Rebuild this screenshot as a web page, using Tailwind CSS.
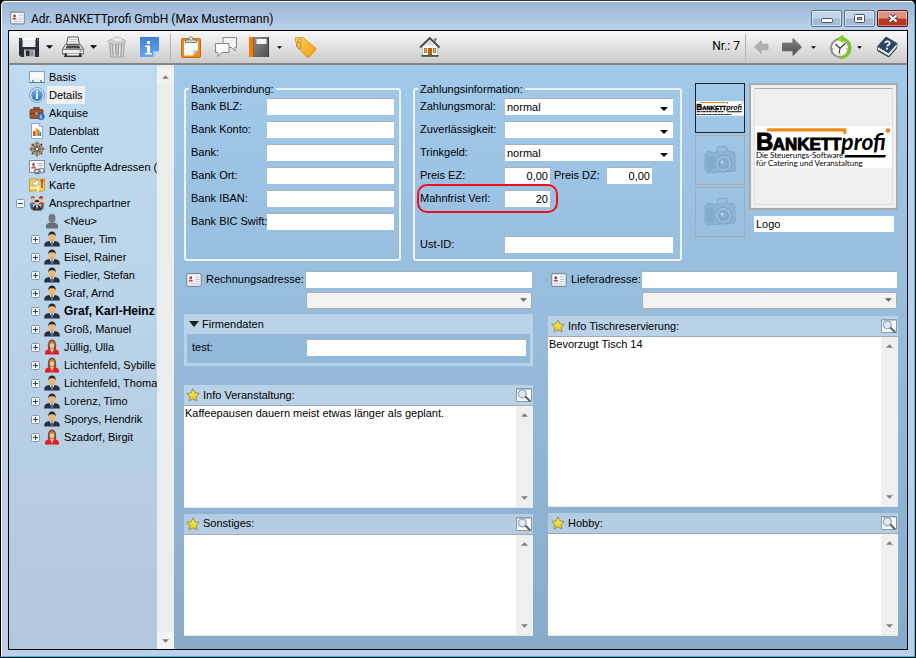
<!DOCTYPE html>
<html lang="de">
<head>
<meta charset="utf-8">
<meta name="viewport" content="width=device-width, initial-scale=1">
<title>Adr. BANKETTprofi GmbH (Max Mustermann)</title>
<script src="https://cdn.jsdelivr.net/npm/@tailwindcss/browser@4"></script>
</head>
<body class="bg-black font-['Liberation_Sans',Arial,sans-serif] text-[11px] leading-4 text-black">

<!-- Icon sprite -->
<svg class="absolute size-0" aria-hidden="true">
  <defs>
    <linearGradient id="gGold" x1="0" y1="0" x2="0" y2="1"><stop offset="0" stop-color="#fdf56a"/><stop offset="1" stop-color="#e3c713"/></linearGradient>
    <linearGradient id="gTag" x1="0" y1="0" x2="1" y2="1"><stop offset="0" stop-color="#ffd45c"/><stop offset="1" stop-color="#ee9b0c"/></linearGradient>
    <linearGradient id="gBlue" x1="0" y1="0" x2="0" y2="1"><stop offset="0" stop-color="#7fb4e6"/><stop offset="1" stop-color="#2a71c2"/></linearGradient>
    <linearGradient id="gNote" x1="0" y1="0" x2="0" y2="1"><stop offset="0" stop-color="#3f7fd8"/><stop offset="1" stop-color="#6aa6ee"/></linearGradient>
    <linearGradient id="gArrow" x1="0" y1="0" x2="0" y2="1"><stop offset="0" stop-color="#8a8a8a"/><stop offset="1" stop-color="#4c4c4c"/></linearGradient>
    <linearGradient id="gBook" x1="0" y1="0" x2="1" y2="1"><stop offset="0" stop-color="#8b8b8b"/><stop offset="1" stop-color="#4f4f4f"/></linearGradient>
  </defs>
  <symbol id="card" viewBox="0 0 16 14">
    <rect x=".7" y=".7" width="14.6" height="12.6" rx="1.5" fill="#fbfcfd" stroke="#7f8c9c" stroke-width="1.2"/>
    <circle cx="4.8" cy="4.8" r="1.5" fill="#8f4a48"/><path d="M2.4 8.6c0-2.6 4.8-2.6 4.8 0z" fill="#c4383a"/>
    <path d="M9 4h4.5M9 6.5h4.5M9 8.5h4.5M2.5 10.8h11" stroke="#b3bcc8" stroke-width=".9"/>
  </symbol>
  <symbol id="down" viewBox="0 0 8 4"><path d="M0 0h8L4 4z" fill="currentColor"/></symbol>
  <symbol id="up" viewBox="0 0 8 4"><path d="M0 4h8L4 0z" fill="currentColor"/></symbol>
  <symbol id="save" viewBox="0 0 22 22">
    <path d="M1 2h20v19H3l-2-2z" fill="#2b2e33"/><path d="M4.5 2h13v9h-13z" fill="#e9edf1"/><path d="M4.5 2h13v2h-13z" fill="#fff"/>
    <path d="M6 13.500h11V21H6z" fill="#b9bdc2"/><path d="M8 14.500h3.500v5.500H8z" fill="#26292d"/><path d="M12.500 14.500h3v5.500h-3z" fill="#8d9196"/><path d="M2 3h1v2H2zM19 3h1v2h-1z" fill="#777"/>
  </symbol>
  <symbol id="print" viewBox="0 0 24 22">
    <path d="M5.500 9L7 1h10l1.500 8z" fill="#fbfbfb" stroke="#55585b"/><path d="M8 3.500h8M7.600 5.500h8.800M7.300 7.500h9.500" stroke="#b4b8ba" stroke-width=".8"/>
    <path d="M4.500 8.500h15l3 4.500v5h-21v-5z" fill="#d3d5d6" stroke="#606366"/><path d="M6 9.500h12l1.500 3h-15z" fill="#444749"/>
    <path d="M1.500 13.500h21v4h-21z" fill="#eceded" stroke="#6c6f71" stroke-width=".8"/><path d="M4 17.500h16l1 3.500H3z" fill="#303235"/><path d="M6 17.500h12v2H6z" fill="#f6f6f6"/><circle cx="19.500" cy="15.300" r="1" fill="#62b53c"/>
  </symbol>
  <symbol id="trash" viewBox="0 0 22 22">
    <path d="M3.500 6.500h15l-1.300 14.500H4.800z" fill="#cfcfcf" stroke="#a4a4a4"/><path d="M6.500 8.500l.7 11M9.700 8.500l.3 11M12.500 8.500l-.3 11M15.600 8.500l-.7 11" stroke="#9c9c9c" stroke-width="1.200"/><path d="M8 8.500l.5 11M14 8.500l-.5 11" stroke="#f0f0f0"/>
    <ellipse cx="11" cy="5.500" rx="9" ry="2.600" fill="#dcdcdc" stroke="#a9a9a9"/><path d="M5 4.500l3-3 4-.5 4 1.500 1.500 2.500-6 1.500z" fill="#e8e8e8" stroke="#b5b5b5" stroke-width=".8"/>
  </symbol>
  <symbol id="note" viewBox="0 0 22 22">
    <path d="M2 1h19v14l-6 6H2z" fill="url(#gNote)"/><path d="M15 21c1-2 .8-4 .3-6 2 .6 4 .6 5.700 0z" fill="#b8d6fa"/>
    <path d="M9 5h3v3H9zM7 9.500h5V17h2v1.500H7V17h2v-6H7z" fill="#fff"/>
  </symbol>
  <symbol id="clip" viewBox="0 0 22 22">
    <rect x="1.500" y="2.500" width="19" height="19" rx="1" fill="#f08a1d" stroke="#c96a0a"/><path d="M4 5h14v9l-5 5.500H4z" fill="#fbfbfb"/><path d="M12.500 19.500l1-5.500H18z" fill="#c3c8cc"/>
    <path d="M5.500 6.500V4H9a2 2 0 0 1 4 0h3.500v2.500z" fill="#d8dadc" stroke="#707477" stroke-width=".9"/><circle cx="11" cy="2.500" r="1.800" fill="#eee" stroke="#777" stroke-width=".8"/>
  </symbol>
  <symbol id="chat" viewBox="0 0 24 22">
    <path d="M9 1.500h13.500v10H21v3.500l-3.500-3.500H9z" fill="#f3f3f3" stroke="#85888a"/><path d="M1.500 7.500H15v9H7.500L4 20.500v-4H1.500z" fill="#fafafa" stroke="#85888a"/>
  </symbol>
  <symbol id="folder" viewBox="0 0 22 22">
    <path d="M1 1h5v20H1z" fill="#ee7d12"/><path d="M5 1h1v20H5z" fill="#b85505"/><path d="M6 1h15v20H6z" fill="url(#gBook)"/><path d="M8.500 3h10v5h-10z" fill="#f4f4f4"/><path d="M20 1h1v20h-1z" fill="#3e3e3e"/>
  </symbol>
  <symbol id="tag" viewBox="0 0 24 22">
    <path d="M2 2l8-.5L22.500 12c.7.600.7 1.300 0 2L16 21c-.7.600-1.500.6-2.100 0L4 11z" fill="url(#gTag)" stroke="#d18a10" stroke-width=".8"/><circle cx="6.500" cy="5" r="1.600" fill="#fff6dc" stroke="#9c7a33" stroke-width=".8"/><path d="M6.500 5c-3.500 1.500-3.500 5.500-1 7.500s3-2 1.500-6" fill="none" stroke="#a68648" stroke-width="1"/>
  </symbol>
  <symbol id="home" viewBox="0 0 22 22">
    <path d="M3.500 10.500L11 3.500l7.500 7V20h-15z" fill="#fafafa" stroke="#aaa" stroke-width=".6"/><path d="M1 11.500L10.800 2 20.500 11.500" fill="none" stroke="#444b4e" stroke-width="1.900"/><path d="M6 9.500l5-4.800 5 4.800z" fill="#d9dcdd"/>
    <path d="M15 3h3M16 3v3" stroke="#555" stroke-width="1.200"/><path d="M5 12h3v5H5zM14 12h3v5h-3z" fill="#a8793a"/><path d="M6 13h1v1H6zM6 15h1v1H6zM15 13h1v1h-1zM15 15h1v1h-1z" fill="#fff"/><path d="M9 12h4v7H9z" fill="#c25d0c"/><path d="M2.500 19h17v1.800h-17z" fill="#4b4d4d"/><path d="M9 18.500h4v1.500H9z" fill="#3c7a1e"/>
  </symbol>
  <symbol id="prev" viewBox="0 0 16 16"><path d="M8.500 1.500v3.800h6.500v5.400H8.500v3.800L1.500 8z" fill="#b1b1b1" stroke="#a2a2a2" stroke-width=".7"/></symbol>
  <symbol id="next" viewBox="0 0 22 22"><path d="M12 2.500v4.700H1.500v7.600H12v4.700l8.500-8.500z" fill="url(#gArrow)" stroke="#555" stroke-width=".8"/></symbol>
  <symbol id="clock" viewBox="0 0 24 24">
    <circle cx="12" cy="13" r="9" fill="#f6f6f4" stroke="#8c8f8b" stroke-width="2"/><path d="M12 3.500c6-.5 10 4 10 9.500s-4.500 10-10 9.800" fill="none" stroke="#7cc81e" stroke-width="3"/><path d="M15 0v7.500L9 4z" fill="#8fda24" stroke="#5ea40e" stroke-width=".5"/>
    <path d="M7.500 9l4.500 4.500L17.500 8M12 13.500l-1 5" fill="none" stroke="#3c3f3c" stroke-width="1.200"/><path d="M4 14l1.500 0M12 20v-1M18 14h1.500" stroke="#777"/>
  </symbol>
  <symbol id="help" viewBox="0 0 22 22">
    <path d="M10 1L21 7.500 12.500 17 1.500 10.500z" fill="#2c4763" stroke="#1c3048" stroke-width=".8"/><path d="M1.500 10.500L12.500 17 21 7.500v3.500L12.800 20.500 1.500 14z" fill="#e6eaed" stroke="#2c4763" stroke-width=".7"/><path d="M1.500 13.500l11.200 6.800L21 11v1.300l-8.200 9.200L1.500 15z" fill="#233a54"/>
    <path d="M9 6.800c1.200-2.600 5.300-1.400 4.700.8-.4 1.400-2.200 1-2.500 2.800" fill="none" stroke="#fff" stroke-width="1.700"/><path d="M10 11.700h2v1.800h-2z" fill="#fff"/>
  </symbol>
  <symbol id="basis" viewBox="0 0 16 16"><path d="M.5 2.500h15v11H.5z" fill="#eaf4f4" stroke="#8f9fac"/><path d="M.5 13.500h15" stroke="#5f7c8e"/><path d="M3 11h2v2H3zM11 11h2v2h-2z" fill="#7ca4a9"/><path d="M2 4h12v5H2z" fill="#f7fcfb"/></symbol>
  <symbol id="info" viewBox="0 0 16 16"><circle cx="8" cy="8" r="7.400" fill="#eef4fa" stroke="#5f8fc4" stroke-width=".9"/><circle cx="8" cy="8" r="5.900" fill="url(#gBlue)"/><path d="M7 3.700h2v1.800H7zM7 6.500h2v5.500H7z" fill="#fff"/></symbol>
  <symbol id="case" viewBox="0 0 16 16"><path d="M5 5V3h5v2" fill="none" stroke="#5d3216" stroke-width="1.300"/><rect x="1" y="4.500" width="13" height="9" rx="1" fill="#a3562a" stroke="#71371a" stroke-width=".8"/><path d="M1 8.500h13" stroke="#6a3216"/><path d="M6.500 7.500h2v2h-2z" fill="#e5c38b"/><circle cx="12" cy="11.500" r="3.300" fill="#2e7ac8" stroke="#1d5799" stroke-width=".5"/><path d="M11.500 9.500h1v1h-1zM11.500 11h1v2.500h-1z" fill="#fff"/></symbol>
  <symbol id="chart" viewBox="0 0 16 16"><path d="M2.500.5h8l3 3v12h-11z" fill="#fff" stroke="#8b9cb0" stroke-width=".9"/><path d="M10.500.5v3h3" fill="#dce5ee" stroke="#8b9cb0" stroke-width=".8"/><path d="M4 8h2.500v5H4z" fill="#e8433a"/><path d="M6.500 5.500H9V13H6.500z" fill="#f4a02a"/><path d="M9 7h1.500v6H9z" fill="#50b848"/><path d="M10.500 9H12v4h-1.500z" fill="#3f70d0"/></symbol>
  <symbol id="wheel" viewBox="0 0 16 16"><path d="M8 .5v15M.5 8h15M2.700 2.700l10.600 10.600M13.300 2.700L2.700 13.300" stroke="#6f5238" stroke-width="1.500"/><circle cx="8" cy="8" r="5" fill="none" stroke="#5d452f" stroke-width="2.200"/><circle cx="8" cy="8" r="5" fill="none" stroke="#d8c3a5" stroke-width="1"/><circle cx="8" cy="8" r="1.900" fill="#e8d6bb" stroke="#5d452f" stroke-width=".8"/></symbol>
  <symbol id="link" viewBox="0 0 16 16"><path d="M.5 1.500h15v12H.5z" fill="#f7f9fa" stroke="#7f8c9c"/><circle cx="4.500" cy="5.500" r="1.400" fill="#95504a"/><path d="M2 9.500c0-3 5-3 5 0z" fill="#cf5050"/><path d="M8.500 4.500h5M8.500 6.500h5" stroke="#a9b5c2"/><rect x="5.500" y="10.500" width="5.500" height="4" rx="2" fill="none" stroke="#70777e" stroke-width="1.400"/><rect x="9.500" y="9.500" width="5.500" height="4" rx="2" fill="none" stroke="#8c939a" stroke-width="1.400"/></symbol>
  <symbol id="map" viewBox="0 0 16 16"><path d="M.5 2.500l5-1 5 1 5-1v12l-5 1-5-1-5 1z" fill="#f0cf55" stroke="#bd9425" stroke-width=".8"/><path d="M1 11h10M9 8v7" stroke="#fff6c8" stroke-width="1.500"/><path d="M3.500 5h3V3.500h3V8h-6z" fill="#fff" stroke="#999" stroke-width=".7"/><circle cx="13" cy="4" r="1.700" fill="#e23c26"/><path d="M13 5.500V11" stroke="#8d2b1e" stroke-width="1.200"/></symbol>
  <symbol id="man" viewBox="0 0 16 16"><path d="M.3 15.500v-1.800c0-2.400 2.200-3 4.700-3.700h6c2.500.7 4.700 1.300 4.700 3.700v1.800z" fill="#2d3035"/><path d="M5.500 10h5L8 14.800z" fill="#f4f6f8"/><path d="M7.300 11h1.400l.6 4.500H6.700z" fill="#3b6fb8"/><ellipse cx="8" cy="6" rx="3.300" ry="4" fill="#edb878"/><path d="M4.200 5.500C3.700-1.200 12.300-1.200 11.800 5.500 11 3.500 9.500 3.300 8 3.300s-3 .2-3.800 2.200z" fill="#292421"/><path d="M6.500 8.500h3v2l-1.500 1-1.500-1z" fill="#dca05f"/></symbol>
  <symbol id="woman" viewBox="0 0 16 16"><path d="M4.300 11C3 5 4.500.5 8 .5S13 5 11.700 11z" fill="#8a4b2a"/><path d="M1 15.500v-1.800c0-2.400 2-3.200 4.500-3.700h5c2.500.5 4.500 1.300 4.500 3.700v1.800z" fill="#e3222a"/><path d="M6 9.800h4L8 14z" fill="#f6d9bb"/><ellipse cx="8" cy="6" rx="2.400" ry="3.500" fill="#f2c596"/><path d="M5.400 5.500C5.500 2.500 10.500 2.500 10.600 5.500 9.500 3.700 7.500 4 5.400 5.500z" fill="#9b5a35"/><path d="M4 13v2.500M12 13v2.500" stroke="#a8131a" stroke-width=".7"/></symbol>
  <symbol id="shade" viewBox="0 0 16 16"><path d="M2 15.500v-2.700c0-2 2-2.600 4-3.300h4c2 .7 4 1.300 4 3.300v2.700z" fill="#6a6e72"/><ellipse cx="8" cy="5.200" rx="3.500" ry="4.500" fill="#777b7f"/></symbol>
  <symbol id="team" viewBox="0 0 16 16"><circle cx="3.800" cy="3.500" r="2.200" fill="#edb56f"/><path d="M1.500 3C2 .5 5.500.5 6 3z" fill="#a06024"/><path d="M.5 9.500C.5 6 7 6 7 9.500z" fill="#4c83c0"/><circle cx="12" cy="3.500" r="2.200" fill="#edb880"/><path d="M9.800 3.500C10 0 14.200 0 14.200 3.500z" fill="#b92b25"/><path d="M9 9.500C9 6 15.500 6 15.500 9.500z" fill="#d83b34"/><path d="M1 9.500h3v5H2zM12 9.500h3l-1 5h-2z" fill="#53585e"/><circle cx="8" cy="7.500" r="2.400" fill="#edb880"/><path d="M5.600 7C6 4 10 4 10.400 7z" fill="#2b2420"/><path d="M3.500 15.500C3.500 8 12.500 8 12.500 15.500z" fill="#2e3136"/><path d="M7 10.500h2l-1 4z" fill="#fff"/></symbol>
  <symbol id="plus" viewBox="0 0 9 9"><rect x=".5" y=".5" width="8" height="8" rx="1" fill="#f6f8fa" stroke="#8b98a8"/><path d="M2 4.500h5M4.500 2v5" stroke="#2a4280"/></symbol>
  <symbol id="minus" viewBox="0 0 9 9"><rect x=".5" y=".5" width="8" height="8" rx="1" fill="#f6f8fa" stroke="#8b98a8"/><path d="M2 4.500h5" stroke="#2a4280"/></symbol>
  <symbol id="star" viewBox="0 0 14 14"><path d="M7 .8l1.900 4.100 4.500.5-3.300 3.100.9 4.500-4-2.200-4 2.200.9-4.500L.6 5.400l4.500-.5z" fill="url(#gGold)" stroke="#8f8a4c" stroke-width=".9" stroke-linejoin="round"/></symbol>
  <symbol id="find" viewBox="0 0 16 14"><path d="M.5.5h15v13H.5z" fill="#f8fafb" stroke="#8f9aa5"/><path d="M.5 1.500h15" stroke="#8a97a4" stroke-dasharray="1 1"/><circle cx="6.300" cy="5.800" r="4" fill="#dcebf8" stroke="#92a4b5" stroke-width="1.200"/><path d="M9.300 8.500l5 5" stroke="#5d6164" stroke-width="2"/></symbol>
  <symbol id="camera" viewBox="0 0 34 30">
    <path d="M2 9l2-1V6.500h4V8l6-1 1-5 8-1 2 5 6 1 1 2v17L4 28l-2-3z" fill="#8db3d3" stroke="#7ba3c6" stroke-width=".8"/><path d="M15.500 2.500L22 2l1 3.500-8 .8z" fill="#9bbfdc"/><path d="M3 11l8-.8v15L4 26z" fill="#82aacc"/>
    <circle cx="20.500" cy="18.500" r="8.300" fill="#97bbd9" stroke="#7ba2c4"/><circle cx="20.500" cy="18.500" r="5.600" fill="#7fa7ca"/><circle cx="20.500" cy="18.500" r="3.300" fill="#8bb2d5"/><circle cx="19" cy="17" r="1.400" fill="#b9d6ec"/>
  </symbol>
</svg>

<div class="flex min-h-screen flex-col rounded-t-md border border-t-[#33343c] border-r-black border-b-black border-l-black bg-[#b9d0ea]">
 <div class="flex flex-1 flex-col rounded-t-[5px] border border-t-white border-r-[#2cc4e4] border-b-[#2cc4e4] border-l-white bg-linear-to-b from-[#9bb5d4] to-[#b9d1eb] to-[28px] px-[6px] pb-[6px]">

  <header class="flex h-7 items-center gap-[6px] pl-[2px]">
    <svg class="mt-[3px] h-[14px] w-[15px]"><use href="#card"/></svg>
    <h1 class="mt-[5px] font-[Roboto,sans-serif] text-[12px] leading-5">Adr. BANKETTprofi GmbH (Max Mustermann)</h1>
    <div class="ml-auto flex gap-[2px] pt-[5px]">
      <button aria-label="Minimieren" class="flex h-[17px] w-[31px] items-center justify-center rounded-[2px] border border-[#5b7591] bg-linear-to-b from-[#c3d5ea] from-45% to-[#a2bbd7] to-55% pt-1 ring-1 ring-white/50 ring-inset"><svg class="h-[5px] w-[12px]"><rect x=".5" y=".5" width="11" height="4" rx="1" fill="#fff" stroke="#4a5563"/></svg></button>
      <button aria-label="Maximieren" class="flex h-[17px] w-[31px] items-center justify-center rounded-[2px] border border-[#5b7591] bg-linear-to-b from-[#c3d5ea] from-45% to-[#a2bbd7] to-55% ring-1 ring-white/50 ring-inset"><svg class="h-[9px] w-[11px]"><rect x=".5" y=".5" width="10" height="8" rx="1" fill="#fff" stroke="#4a5563"/><rect x="3.500" y="3.500" width="4" height="2" fill="#a7bfda" stroke="#4a5563"/></svg></button>
      <button aria-label="Schließen" class="flex h-[17px] w-[31px] items-center justify-center rounded-[2px] border border-[#4d1822] bg-linear-to-b from-[#dc9384] from-45% to-[#b9361f] to-55% ring-1 ring-white/40 ring-inset"><svg class="h-[9px] w-[12px]"><path d="M2.500 1.500l7 6M9.500 1.500l-7 6" stroke="#4c3a44" stroke-width="4"/><path d="M2.500 1.500l7 6M9.500 1.500l-7 6" stroke="#fff" stroke-width="2.200"/></svg></button>
    </div>
  </header>

  <div class="flex flex-1 flex-col border border-black">
   <nav aria-label="Werkzeuge" class="flex h-[34px] shrink-0 items-center border-b-2 border-[#858585] bg-linear-to-b from-[#f8f8f8] to-[#cbcbcb] pr-[9px] pl-[9px]">
     <button aria-label="Speichern"><svg class="size-[22px]"><use href="#save"/></svg></button>
     <button aria-label="Speichern-Menü" class="ml-[3px] flex w-3 justify-center"><svg class="h-1 w-[7px]"><use href="#down"/></svg></button>
     <button aria-label="Drucken" class="ml-[6px]"><svg class="h-[22px] w-6"><use href="#print"/></svg></button>
     <button aria-label="Druck-Menü" class="ml-[2px] flex w-3 justify-center"><svg class="h-1 w-[7px]"><use href="#down"/></svg></button>
     <button aria-label="Löschen" class="ml-[7px]"><svg class="size-[22px]"><use href="#trash"/></svg></button>
     <button aria-label="Info" class="ml-[10px]"><svg class="size-[22px]"><use href="#note"/></svg></button>
     <span class="ml-[10px] h-[26px] w-px bg-[#b4b4b4]"></span>
     <button aria-label="Aufgaben" class="ml-[9px]"><svg class="size-[22px]"><use href="#clip"/></svg></button>
     <button aria-label="Nachrichten" class="ml-3"><svg class="h-[22px] w-6"><use href="#chat"/></svg></button>
     <button aria-label="Ordner" class="ml-[10px]"><svg class="size-[22px]"><use href="#folder"/></svg></button>
     <button aria-label="Ordner-Menü" class="ml-[3px] flex w-3 justify-center"><svg class="h-[3px] w-[5px]"><use href="#down"/></svg></button>
     <button aria-label="Etikett" class="ml-2"><svg class="h-[22px] w-6"><use href="#tag"/></svg></button>
     <button aria-label="Start" class="ml-[102px]"><svg class="size-[22px]"><use href="#home"/></svg></button>
     <span class="ml-auto pb-[2px] font-[Roboto,sans-serif] text-[12px]">Nr.: 7</span>
     <span class="ml-[5px] h-[26px] w-px bg-[#b4b4b4]"></span>
     <button aria-label="Zurück" class="ml-[7px]"><svg class="size-4"><use href="#prev"/></svg></button>
     <button aria-label="Weiter" class="ml-3"><svg class="size-[22px]"><use href="#next"/></svg></button>
     <button aria-label="Weiter-Menü" class="ml-1 flex w-3 justify-center"><svg class="h-[3px] w-[5px]"><use href="#down"/></svg></button>
     <button aria-label="Verlauf" class="ml-[9px]"><svg class="size-6"><use href="#clock"/></svg></button>
     <button aria-label="Verlauf-Menü" class="ml-px flex w-3 justify-center"><svg class="h-[3px] w-[5px]"><use href="#down"/></svg></button>
     <button aria-label="Hilfe" class="ml-[11px]"><svg class="size-[22px]"><use href="#help"/></svg></button>
   </nav>

   <div class="flex flex-1 bg-linear-to-b from-[#a1c9ea] to-[#89abca]">
    <aside class="flex w-[165px] shrink-0 bg-linear-to-b from-[#bfdbf1] to-[#b2c8dc]">
      <ul class="w-[148px] overflow-hidden pt-[3px] leading-[18px] whitespace-nowrap">
        <li class="flex items-center pl-5"><svg class="mr-1 size-4 shrink-0"><use href="#basis"/></svg><a href="#">Basis</a></li>
        <li class="flex items-center pl-5"><svg class="mr-[2px] size-4 shrink-0"><use href="#info"/></svg><a href="#" class="bg-[#f0f0f0] px-[2px]">Details</a></li>
        <li class="flex items-center pl-5"><svg class="mr-1 size-4 shrink-0"><use href="#case"/></svg><a href="#">Akquise</a></li>
        <li class="flex items-center pl-5"><svg class="mr-1 size-4 shrink-0"><use href="#chart"/></svg><a href="#">Datenblatt</a></li>
        <li class="flex items-center pl-5"><svg class="mr-1 size-4 shrink-0"><use href="#wheel"/></svg><a href="#">Info Center</a></li>
        <li class="flex items-center pl-5"><svg class="mr-1 size-4 shrink-0"><use href="#link"/></svg><a href="#">Verknüpfte Adressen (2)</a></li>
        <li class="flex items-center pl-5"><svg class="mr-1 size-4 shrink-0"><use href="#map"/></svg><a href="#">Karte</a></li>
        <li>
          <div class="flex items-center pl-[7px]"><svg class="mr-1 size-[9px] shrink-0"><use href="#minus"/></svg><svg class="mr-1 size-4 shrink-0"><use href="#team"/></svg><a href="#">Ansprechpartner</a></div>
          <ul>
            <li class="flex items-center pl-[35px]"><svg class="mr-1 size-4 shrink-0"><use href="#shade"/></svg><a href="#">&lt;Neu&gt;</a></li>
            <li class="flex items-center pl-[22px]"><svg class="mr-1 size-[9px] shrink-0"><use href="#plus"/></svg><svg class="mr-1 size-4 shrink-0"><use href="#man"/></svg><a href="#">Bauer, Tim</a></li>
            <li class="flex items-center pl-[22px]"><svg class="mr-1 size-[9px] shrink-0"><use href="#plus"/></svg><svg class="mr-1 size-4 shrink-0"><use href="#man"/></svg><a href="#">Eisel, Rainer</a></li>
            <li class="flex items-center pl-[22px]"><svg class="mr-1 size-[9px] shrink-0"><use href="#plus"/></svg><svg class="mr-1 size-4 shrink-0"><use href="#man"/></svg><a href="#">Fiedler, Stefan</a></li>
            <li class="flex items-center pl-[22px]"><svg class="mr-1 size-[9px] shrink-0"><use href="#plus"/></svg><svg class="mr-1 size-4 shrink-0"><use href="#man"/></svg><a href="#">Graf, Arnd</a></li>
            <li class="flex items-center pl-[22px]"><svg class="mr-1 size-[9px] shrink-0"><use href="#plus"/></svg><svg class="mr-1 size-4 shrink-0"><use href="#man"/></svg><a href="#" class="text-[12px] leading-[18px] font-bold">Graf, Karl-Heinz</a></li>
            <li class="flex items-center pl-[22px]"><svg class="mr-1 size-[9px] shrink-0"><use href="#plus"/></svg><svg class="mr-1 size-4 shrink-0"><use href="#man"/></svg><a href="#">Groß, Manuel</a></li>
            <li class="flex items-center pl-[22px]"><svg class="mr-1 size-[9px] shrink-0"><use href="#plus"/></svg><svg class="mr-1 size-4 shrink-0"><use href="#woman"/></svg><a href="#">Jüllig, Ulla</a></li>
            <li class="flex items-center pl-[22px]"><svg class="mr-1 size-[9px] shrink-0"><use href="#plus"/></svg><svg class="mr-1 size-4 shrink-0"><use href="#woman"/></svg><a href="#">Lichtenfeld, Sybille</a></li>
            <li class="flex items-center pl-[22px]"><svg class="mr-1 size-[9px] shrink-0"><use href="#plus"/></svg><svg class="mr-1 size-4 shrink-0"><use href="#man"/></svg><a href="#">Lichtenfeld, Thomas</a></li>
            <li class="flex items-center pl-[22px]"><svg class="mr-1 size-[9px] shrink-0"><use href="#plus"/></svg><svg class="mr-1 size-4 shrink-0"><use href="#man"/></svg><a href="#">Lorenz, Timo</a></li>
            <li class="flex items-center pl-[22px]"><svg class="mr-1 size-[9px] shrink-0"><use href="#plus"/></svg><svg class="mr-1 size-4 shrink-0"><use href="#man"/></svg><a href="#">Sporys, Hendrik</a></li>
            <li class="flex items-center pl-[22px]"><svg class="mr-1 size-[9px] shrink-0"><use href="#plus"/></svg><svg class="mr-1 size-4 shrink-0"><use href="#woman"/></svg><a href="#">Szadorf, Birgit</a></li>
          </ul>
        </li>
      </ul>
      <div class="flex w-[17px] flex-col justify-between bg-[#ececec] pt-[3px] text-[#808080]">
        <button aria-label="Nach oben" class="flex h-[17px] items-center justify-center bg-[#f2f2f2]"><svg class="h-1 w-[7px]"><use href="#up"/></svg></button>
        <button aria-label="Nach unten" class="flex h-[17px] items-center justify-center bg-[#f2f2f2]"><svg class="h-1 w-[7px]"><use href="#down"/></svg></button>
      </div>
    </aside>

    <main class="flex min-w-0 flex-1 flex-col gap-[10px] pt-4 pr-[9px] pb-[13px] pl-[10px] leading-[17px]">
      <div class="flex h-[180px]">
        <fieldset class="mr-3 min-w-0 flex-[205] rounded-[3px] border-2 border-[#edf3f8] pr-[5px] pl-[3px]">
          <legend class="px-[2px] leading-4">Bankverbindung:</legend>
          <div class="grid grid-cols-[76px_minmax(0,1fr)] gap-y-[6px] pt-px pl-[2px] whitespace-nowrap">
            <label for="blz">Bank BLZ:</label><input id="blz" class="h-[17px] w-full border-t border-[#a9b0b8] bg-white px-[2px]">
            <label for="konto">Bank Konto:</label><input id="konto" class="h-[17px] w-full border-t border-[#a9b0b8] bg-white px-[2px]">
            <label for="bank">Bank:</label><input id="bank" class="h-[17px] w-full border-t border-[#a9b0b8] bg-white px-[2px]">
            <label for="ort">Bank Ort:</label><input id="ort" class="h-[17px] w-full border-t border-[#a9b0b8] bg-white px-[2px]">
            <label for="iban">Bank IBAN:</label><input id="iban" class="h-[17px] w-full border-t border-[#a9b0b8] bg-white px-[2px]">
            <label for="bic">Bank BIC Swift:</label><input id="bic" class="h-[17px] w-full border-t border-[#a9b0b8] bg-white px-[2px]">
          </div>
        </fieldset>

        <fieldset class="mr-[13px] min-w-0 flex-[255] rounded-[3px] border-2 border-[#edf3f8] pr-[7px] pl-[3px]">
          <legend class="px-[2px] leading-4">Zahlungsinformation:</legend>
          <div class="flex flex-col gap-[6px] pt-px pl-[2px] whitespace-nowrap">
            <div class="flex"><label for="moral" class="w-[85px]">Zahlungsmoral:</label><div class="relative flex-1"><select id="moral" class="block h-[17px] w-full appearance-none border-t border-[#a9b0b8] bg-white px-[2px]"><option>normal</option></select><svg class="pointer-events-none absolute top-[9px] right-[5px] h-1 w-2"><use href="#down"/></svg></div></div>
            <div class="flex"><label for="zuv" class="w-[85px]">Zuverlässigkeit:</label><div class="relative flex-1"><select id="zuv" class="block h-[17px] w-full appearance-none border-t border-[#a9b0b8] bg-white px-[2px]"><option></option></select><svg class="pointer-events-none absolute top-[9px] right-[5px] h-1 w-2"><use href="#down"/></svg></div></div>
            <div class="flex"><label for="trink" class="w-[85px]">Trinkgeld:</label><div class="relative flex-1"><select id="trink" class="block h-[17px] w-full appearance-none border-t border-[#a9b0b8] bg-white px-[2px]"><option>normal</option></select><svg class="pointer-events-none absolute top-[9px] right-[5px] h-1 w-2"><use href="#down"/></svg></div></div>
            <div class="flex"><label for="ez" class="w-[85px]">Preis EZ:</label><input id="ez" value="0,00" class="h-[17px] w-[45px] border-t border-[#a9b0b8] bg-white px-[2px] text-right"><label for="dz" class="w-[57px] pl-1">Preis DZ:</label><input id="dz" value="0,00" class="h-[17px] w-[45px] border-t border-[#a9b0b8] bg-white px-[2px] text-right"></div>
            <div class="relative flex"><label for="mahn" class="w-[85px]">Mahnfrist Verl:</label><input id="mahn" value="20" class="h-[17px] w-[45px] border-t border-[#a9b0b8] bg-white px-[2px] text-right"><span class="pointer-events-none absolute -inset-y-[6px] -left-[3px] w-[141px] rounded-[10px] border-2 border-[#ee1018]"></span></div>
            <div class="mt-[23px] flex"><label for="ust" class="w-[85px]">Ust-ID:</label><input id="ust" class="h-[17px] min-w-0 flex-1 border-t border-[#a9b0b8] bg-white px-[2px]"></div>
          </div>
        </fieldset>

        <div class="flex w-[203px] shrink-0 gap-1 pt-[2px]">
          <div class="flex w-[50px] flex-col gap-[2px]">
            <button aria-label="Bild 1" class="flex h-[50px] items-center justify-center border border-[#1c2228]">
              <svg class="h-[15px] w-12" viewBox="0 0 138 42" aria-hidden="true">
                <path d="M0 0h138v42H0z" fill="#fff"/><path d="M12 2h80v6h-3V5.500H12z" fill="#ee8a17"/>
                <text x="1" y="25" font-family="'Liberation Sans',sans-serif" font-weight="700" font-size="24" stroke="#000" stroke-width="1">B</text>
                <text x="18" y="25" font-family="'Liberation Sans',sans-serif" font-weight="700" font-size="17" stroke="#000" stroke-width="1">ANKETT</text>
                <text x="87" y="25" font-family="Lato,sans-serif" font-weight="700" font-style="italic" font-size="23">profi</text>
                <circle cx="134" cy="4.500" r="2.300" fill="#ee7d2f"/><path d="M90 29h42l-1 2.500H89z"/>
                <path d="M2 30h80M2 38h100" stroke="#222" stroke-width="3" stroke-dasharray="9 2 5 1"/>
              </svg>
            </button>
            <button aria-label="Bild 2" class="flex h-[50px] items-center justify-center border border-[#a5adb4]"><svg class="h-[30px] w-[34px]"><use href="#camera"/></svg></button>
            <button aria-label="Bild 3" class="flex h-[50px] items-center justify-center border border-[#a5adb4]"><svg class="h-[30px] w-[34px]"><use href="#camera"/></svg></button>
          </div>
          <div class="min-w-0 flex-1">
            <figure class="h-[127px] border-2 border-[#a9abad] bg-[#efefef] p-[3px]"><div class="flex h-full items-center border border-[#dadde2] border-t-[#a9adb2]">
              <svg class="h-[42px] w-full" viewBox="0 0 138 42">
                <path d="M0 0h138v42H0z" fill="#fff"/><path d="M12 2h80v6h-3V5.500H12z" fill="#ee8a17"/>
                <text x="1" y="24" font-family="'Liberation Sans',sans-serif" font-weight="700" font-size="24" stroke="#000" stroke-width="1">B</text>
                <text x="18" y="24" font-family="'Liberation Sans',sans-serif" font-weight="700" font-size="17" stroke="#000" stroke-width="1">ANKETT</text>
                <text x="87" y="24" font-family="Lato,sans-serif" font-weight="700" font-style="italic" font-size="23">profi</text>
                <circle cx="134" cy="4.500" r="2.300" fill="#ee7d2f"/><path d="M91 29h41l-1 2.500H90z"/>
                <text x="1" y="32" font-family="Lato,sans-serif" font-size="8">Die Steuerungs-Software</text>
                <text x="1" y="40" font-family="Lato,sans-serif" font-size="8">für Catering und Veranstaltung</text>
              </svg>
            </div></figure>
            <input aria-label="Bildtitel" value="Logo" class="mx-[5px] mt-[6px] block h-[16px] w-[140px] bg-white px-[2px]">
          </div>
        </div>
      </div>

      <div class="grid flex-1 grid-cols-[349fr_350fr] gap-[15px]">
        <div class="flex min-w-0 flex-col">
          <div class="grid grid-cols-[122px_minmax(0,1fr)] gap-y-1 pr-px">
            <label for="radr" class="flex items-center gap-1 pl-[2px]"><svg class="h-[14px] w-4"><use href="#card"/></svg>Rechnungsadresse:</label>
            <input id="radr" class="h-[17px] w-full border-t border-[#a9b0b8] bg-white px-[2px]">
            <div class="relative col-start-2"><select aria-label="Rechnungsadresse Auswahl" class="block h-[17px] w-full appearance-none rounded-[2px] border border-[#a9adb1] bg-[#f3f3f3]"><option></option></select><svg class="pointer-events-none absolute top-[6px] right-[5px] h-1 w-[7px] text-[#666]"><use href="#down"/></svg></div>
          </div>
          <details open class="mt-[5px] bg-[#bad3e8] px-[3px] pb-[3px]">
            <summary class="flex h-5 items-center gap-[3px] pl-[2px]"><svg class="h-[6px] w-[10px]" viewBox="0 0 10 6"><path d="M0 0h10L5 6z" fill="#1d1d1d"/></svg>Firmendaten</summary>
            <div class="flex h-[29px] bg-[#92b8da] py-[5px] pr-1 pl-[5px]"><label for="test" class="w-[115px]">test:</label><input id="test" class="h-[17px] min-w-0 flex-1 border-t border-[#a9b0b8] bg-white px-[2px]"></div>
          </details>
          <div class="mt-[19px] flex flex-1 flex-col gap-[6px]">
            <section class="flex flex-1 flex-col">
              <div class="flex h-[21px] items-center border-b border-[#a2a9b2] bg-[#bad2e7] pl-[2px]"><svg class="mr-[3px] size-[14px]"><use href="#star"/></svg><label for="veranst">Info Veranstaltung:</label><button aria-label="Info Veranstaltung vergrößern" class="ml-auto"><svg class="mr-px h-[14px] w-4"><use href="#find"/></svg></button></div>
              <div class="flex flex-1 border-b border-[#e3e9ef] bg-white"><textarea id="veranst" class="block min-w-0 flex-1 resize-none overflow-hidden px-px leading-[14px]">Kaffeepausen dauern meist etwas länger als geplant.</textarea><div class="flex w-[17px] flex-col items-center justify-between bg-[#efefef] py-[7px] text-[#808080]"><svg class="h-1 w-[7px]"><use href="#up"/></svg><svg class="h-1 w-[7px]"><use href="#down"/></svg></div></div>
            </section>
            <section class="flex flex-1 flex-col">
              <div class="flex h-[21px] items-center border-b border-[#a2a9b2] bg-[#b5cde2] pl-[2px]"><svg class="mr-[3px] size-[14px]"><use href="#star"/></svg><label for="sonst">Sonstiges:</label><button aria-label="Sonstiges vergrößern" class="ml-auto"><svg class="mr-px h-[14px] w-4"><use href="#find"/></svg></button></div>
              <div class="flex flex-1 border-b border-[#e3e9ef] bg-white"><textarea id="sonst" class="block min-w-0 flex-1 resize-none overflow-hidden px-px leading-[14px]"></textarea><div class="flex w-[17px] flex-col items-center justify-between bg-[#efefef] py-[7px] text-[#808080]"><svg class="h-1 w-[7px]"><use href="#up"/></svg><svg class="h-1 w-[7px]"><use href="#down"/></svg></div></div>
            </section>
          </div>
        </div>

        <div class="flex min-w-0 flex-col">
          <div class="grid grid-cols-[94px_minmax(0,1fr)] gap-y-1 pr-px">
            <label for="ladr" class="flex items-center gap-1 pl-[3px]"><svg class="h-[14px] w-4"><use href="#card"/></svg>Lieferadresse:</label>
            <input id="ladr" class="h-[17px] w-full border-t border-[#a9b0b8] bg-white px-[2px]">
            <div class="relative col-start-2"><select aria-label="Lieferadresse Auswahl" class="block h-[17px] w-full appearance-none rounded-[2px] border border-[#a9adb1] bg-[#f3f3f3]"><option></option></select><svg class="pointer-events-none absolute top-[6px] right-[5px] h-1 w-[7px] text-[#666]"><use href="#down"/></svg></div>
          </div>
          <div class="mt-[7px] flex flex-1 flex-col gap-[6px]">
            <section class="flex flex-[190] flex-col">
              <div class="flex h-[21px] items-center border-b border-[#a2a9b2] bg-[#bad2e7] pl-[3px]"><svg class="mr-[3px] size-[14px]"><use href="#star"/></svg><label for="tisch">Info Tischreservierung:</label><button aria-label="Info Tischreservierung vergrößern" class="ml-auto"><svg class="mr-px h-[14px] w-4"><use href="#find"/></svg></button></div>
              <div class="flex flex-1 border-b border-[#e3e9ef] bg-white"><textarea id="tisch" class="block min-w-0 flex-1 resize-none overflow-hidden px-px leading-[14px]">Bevorzugt Tisch 14</textarea><div class="flex w-[17px] flex-col items-center justify-between bg-[#efefef] py-[7px] text-[#808080]"><svg class="h-1 w-[7px]"><use href="#up"/></svg><svg class="h-1 w-[7px]"><use href="#down"/></svg></div></div>
            </section>
            <section class="flex flex-[122] flex-col">
              <div class="flex h-[21px] items-center border-b border-[#a2a9b2] bg-[#b5cde2] pl-[3px]"><svg class="mr-[3px] size-[14px]"><use href="#star"/></svg><label for="hobby">Hobby:</label><button aria-label="Hobby vergrößern" class="ml-auto"><svg class="mr-px h-[14px] w-4"><use href="#find"/></svg></button></div>
              <div class="flex flex-1 border-b border-[#e3e9ef] bg-white"><textarea id="hobby" class="block min-w-0 flex-1 resize-none overflow-hidden px-px leading-[14px]"></textarea><div class="flex w-[17px] flex-col items-center justify-between bg-[#efefef] py-[7px] text-[#808080]"><svg class="h-1 w-[7px]"><use href="#up"/></svg><svg class="h-1 w-[7px]"><use href="#down"/></svg></div></div>
            </section>
          </div>
        </div>
      </div>
    </main>
   </div>
  </div>
 </div>
</div>
</body>
</html>
